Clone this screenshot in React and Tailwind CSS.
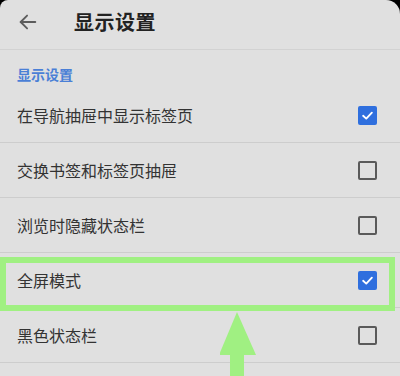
const rows = [
  { label: '在导航抽屉中显示标签页', checked: true },
  { label: '交换书签和标签页抽屉', checked: false },
  { label: '浏览时隐藏状态栏', checked: false },
  { label: '全屏模式', checked: true },
  { label: '黑色状态栏', checked: false },
];

function Checkbox({ checked }) {
  if (checked) {
    return (
      <div className="w-[19px] h-[19px] rounded-[2px] bg-[#2f6fde] flex items-center justify-center">
        <svg viewBox="0 0 24 24" className="w-[15px] h-[15px]" fill="none" stroke="#ffffff" strokeWidth={3} strokeLinecap="round" strokeLinejoin="round">
          <polyline points="5 12.5 10 17 19 7.5" />
        </svg>
      </div>
    );
  }
  return <div className="w-[19px] h-[19px] rounded-[2px] border-2 border-[#5a5a5a]" />;
}

export default function App() {
  return (
    <div className="w-[400px] h-[376px] bg-black overflow-hidden" style={{ fontFamily: '"Noto Sans CJK SC", "Noto Sans", sans-serif' }}>
      <div className="relative h-full bg-[#e0e0e0] rounded-tl-[8px] rounded-tr-[14px]">
        {/* Header */}
        <div className="h-[50px] flex items-center pb-[5px] border-b border-[#d2d2d2]">
          <svg viewBox="0 0 24 24" className="ml-[17px] w-[22px] h-[22px]" fill="none" stroke="#5c5c5c" strokeWidth={2} strokeLinecap="round" strokeLinejoin="round">
            <line x1="20" y1="12" x2="4" y2="12" />
            <polyline points="11 5 4 12 11 19" />
          </svg>
          <h1 className="ml-[35px] text-[20px] font-semibold text-[#222222] tracking-[0.5px]">显示设置</h1>
        </div>

        {/* Section label */}
        <div className="h-[38px] flex items-center pt-[10px] px-[17px]">
          <span className="text-[14px] font-semibold text-[#4a7fd6]">显示设置</span>
        </div>

        {/* Rows */}
        {rows.map((row) => (
          <div key={row.label} className="h-[55px] flex items-center justify-between pl-[17px] pr-[23px] border-b border-[#cdcdcd]">
            <span className="text-[16px] text-[#333333]">{row.label}</span>
            <Checkbox checked={row.checked} />
          </div>
        ))}

        {/* Highlight box annotation */}
        <div className="absolute left-0 top-[257px] w-[395px] h-[54px] border-[6px] border-[#a0f082]" />

        {/* Arrow annotation */}
        <svg className="absolute left-[220px] top-[312px] w-[38px] h-[64px]" viewBox="0 0 38 64">
          <polygon points="17,0 36,43 -1,43" fill="#a0f082" />
          <rect x="10" y="42" width="14" height="22" fill="#a0f082" />
        </svg>
      </div>
    </div>
  );
}
